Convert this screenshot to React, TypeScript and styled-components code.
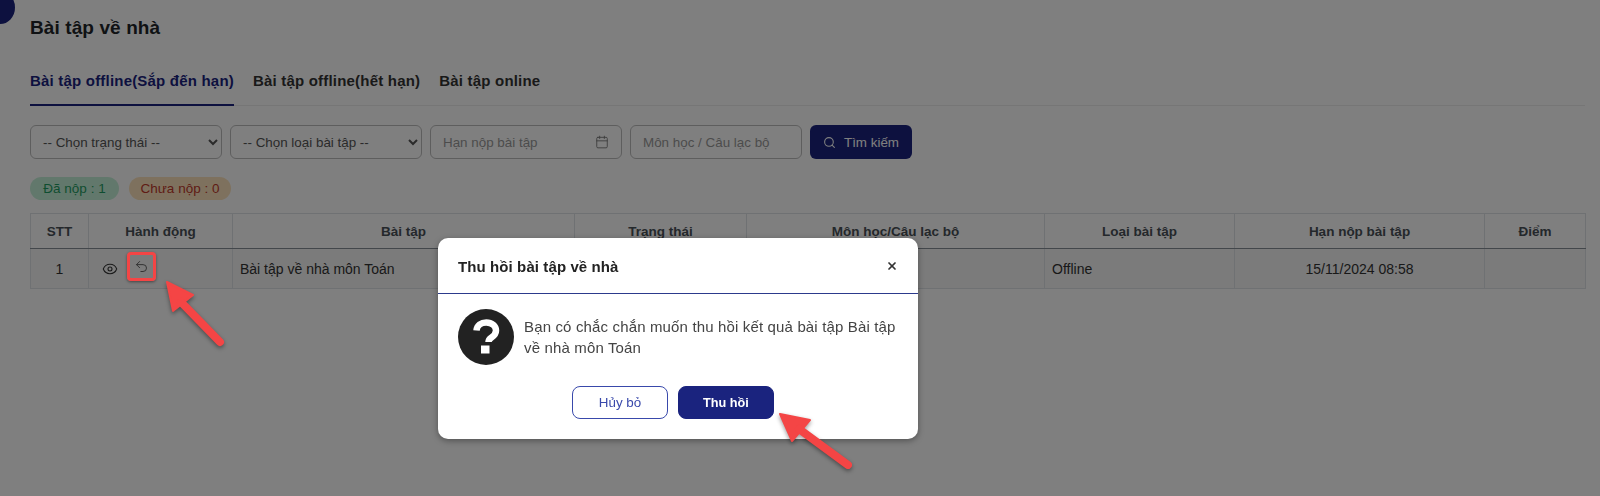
import React from "react";
import styled, { createGlobalStyle } from "styled-components";
import { Calendar, Eye, Search, Undo2, X } from "lucide-react";

const NAVY = "#1a237e";

const Global = createGlobalStyle`
  html, body { margin: 0; height: 496px; overflow: hidden; background: #fff; }
  body { font-family: "Liberation Sans", Arial, sans-serif; color: #212529; }
  * { box-sizing: border-box; }
`;

const Page = styled.main`
  padding: 17px 15px 0 30px;
  height: 496px;
`;
const Corner = styled.div`
  position: absolute;
  left: -15px;
  top: -9px;
  width: 30px;
  height: 33px;
  border-radius: 50%;
  background: ${NAVY};
`;
const Title = styled.h1`
  margin: 0;
  font-size: 19px;
  line-height: 21px;
  font-weight: 700;
  letter-spacing: 0.1px;
  color: #212529;
`;
const Tabs = styled.nav`
  display: flex;
  gap: 19px;
  margin-top: 21px;
  border-bottom: 1px solid #ececec;
`;
const Tab = styled.a<{ $active?: boolean }>`
  font-size: 15px;
  line-height: 17px;
  font-weight: 700;
  letter-spacing: 0.2px;
  padding: 13px 0 15px;
  margin-bottom: -1px;
  color: ${(p) => (p.$active ? NAVY : "#333")};
  border-bottom: 2px solid ${(p) => (p.$active ? NAVY : "transparent")};
`;
const Filters = styled.div`
  display: flex;
  gap: 8px;
  margin-top: 19px;
`;
const Select = styled.select`
  width: 192px;
  height: 34px;
  border: 1px solid #bdbdbd;
  border-radius: 6px;
  background: #fff;
  color: #555;
  font: 13.4px "Liberation Sans", Arial, sans-serif;
  padding: 0 8px;
`;
const Field = styled.div<{ $w: number }>`
  width: ${(p) => p.$w}px;
  height: 34px;
  border: 1px solid #bdbdbd;
  border-radius: 6px;
  background: #fff;
  color: #999;
  font-size: 13.4px;
  display: flex;
  align-items: center;
  justify-content: space-between;
  padding: 0 12px;
`;
const SearchButton = styled.button`
  width: 102px;
  height: 34px;
  border: 0;
  border-radius: 6px;
  background: ${NAVY};
  color: #fff;
  font: 13.4px "Liberation Sans", Arial, sans-serif;
  display: flex;
  align-items: center;
  justify-content: center;
  gap: 8px;
`;
const Badges = styled.div`
  display: flex;
  gap: 10px;
  margin-top: 18px;
`;
const Badge = styled.span<{ $bg: string; $fg: string; $w: number }>`
  width: ${(p) => p.$w}px;
  height: 23px;
  line-height: 23px;
  text-align: center;
  border-radius: 12px;
  font-size: 13.5px;
  background: ${(p) => p.$bg};
  color: ${(p) => p.$fg};
`;
const Table = styled.table`
  width: 1555px;
  margin-top: 13px;
  border-collapse: collapse;
  table-layout: fixed;
  font-size: 14px;
`;
const Th = styled.th`
  height: 35px;
  padding: 0 8px;
  border: 1px solid #dee2e6;
  border-bottom: 1px solid #868e96;
  color: #495057;
  font-size: 13.5px;
  font-weight: 700;
  text-align: center;
`;
const Td = styled.td<{ $center?: boolean }>`
  height: 40px;
  padding: 0 7px;
  border: 1px solid #dee2e6;
  background: #f6f6f6;
  color: #333;
  text-align: ${(p) => (p.$center ? "center" : "left")};
`;
const Actions = styled.div`
  display: flex;
  align-items: center;
  gap: 12px;
  padding-left: 6px;
  color: #333;
`;
const Backdrop = styled.div`
  position: fixed;
  inset: 0;
  background: rgba(0, 0, 0, 0.5);
`;
const Dialog = styled.section`
  position: absolute;
  left: 438px;
  top: 238px;
  width: 480px;
  height: 201px;
  border-radius: 10px;
  background: #fff;
  box-shadow: 0 2px 6px rgba(0, 0, 0, 0.35);
  display: flex;
  flex-direction: column;
`;
const DialogHead = styled.header`
  height: 56px;
  flex: none;
  display: flex;
  align-items: center;
  justify-content: space-between;
  padding: 1px 20px 0;
  border-bottom: 1px solid #2c3a8c;
`;
const DialogTitle = styled.h2`
  margin: 0;
  font-size: 15px;
  font-weight: 700;
  letter-spacing: 0.1px;
  color: #222;
`;
const DialogBody = styled.div`
  display: flex;
  align-items: center;
  gap: 10px;
  padding: 15px 0 0 20px;
`;
const Message = styled.p`
  margin: 0;
  font-size: 15px;
  line-height: 21px;
  color: #444;
  letter-spacing: 0.15px;
  width: 385px;
`;
const DialogFoot = styled.footer`
  display: flex;
  justify-content: center;
  gap: 10px;
  margin-top: 21px;
  padding-right: 10px;
`;
const DialogButton = styled.button<{ $primary?: boolean }>`
  width: 96px;
  height: 33px;
  border-radius: 8px;
  border: 1px solid ${(p) => (p.$primary ? NAVY : "#3949ab")};
  background: ${(p) => (p.$primary ? NAVY : "#fff")};
  color: ${(p) => (p.$primary ? "#fff" : "#3949ab")};
  font: ${(p) => (p.$primary ? "700 12.7px" : "400 13.4px")} "Liberation Sans", Arial, sans-serif;
`;
const Highlight = styled.div`
  position: absolute;
  left: 127px;
  top: 252px;
  width: 29px;
  height: 29px;
  border: 3px solid #f44545;
  border-radius: 4px;
  display: flex;
  align-items: center;
  justify-content: center;
  box-shadow: 0 1px 3px rgba(0, 0, 0, 0.45);
`;
const ArrowSvg = styled.svg`
  position: absolute;
  left: 0;
  top: 0;
  width: 1600px;
  height: 496px;
  pointer-events: none;
  filter: drop-shadow(0 2px 2px rgba(0, 0, 0, 0.4));
`;

const cols = [58, 144, 342, 172, 298, 190, 250, 101];
const heads = ["STT", "Hành động", "Bài tập", "Trạng thái", "Môn học/Câu lạc bộ", "Loại bài tập", "Hạn nộp bài tập", "Điểm"];

export default function App() {
  return (
    <>
      <Global />
      <Page>
        <Corner />
        <Title>Bài tập về nhà</Title>
        <Tabs>
          <Tab $active>Bài tập offline(Sắp đến hạn)</Tab>
          <Tab>Bài tập offline(hết hạn)</Tab>
          <Tab>Bài tập online</Tab>
        </Tabs>
        <Filters>
          <Select defaultValue="a"><option value="a">-- Chọn trạng thái --</option></Select>
          <Select defaultValue="a"><option value="a">-- Chọn loại bài tập --</option></Select>
          <Field $w={192}>Hạn nộp bài tập<Calendar size={14} strokeWidth={1.5} color="#777" /></Field>
          <Field $w={172}>Môn học / Câu lạc bộ</Field>
          <SearchButton><Search size={13} />Tìm kiếm</SearchButton>
        </Filters>
        <Badges>
          <Badge $w={89} $bg="#c5f0d8" $fg="#1f9d63">Đã nộp : 1</Badge>
          <Badge $w={102} $bg="#fde3bd" $fg="#c0392b">Chưa nộp : 0</Badge>
        </Badges>
        <Table>
          <colgroup>{cols.map((w, i) => <col key={i} style={{ width: w }} />)}</colgroup>
          <thead><tr>{heads.map((h) => <Th key={h}>{h}</Th>)}</tr></thead>
          <tbody>
            <tr>
              <Td $center>1</Td>
              <Td><Actions><Eye size={16} strokeWidth={1.6} /></Actions></Td>
              <Td>Bài tập về nhà môn Toán</Td>
              <Td></Td>
              <Td></Td>
              <Td>Offline</Td>
              <Td $center>15/11/2024 08:58</Td>
              <Td></Td>
            </tr>
          </tbody>
        </Table>
      </Page>
      <Backdrop />
      <Highlight><Undo2 size={15} strokeWidth={1.6} color="#333" /></Highlight>
      <Dialog>
        <DialogHead>
          <DialogTitle>Thu hồi bài tập về nhà</DialogTitle>
          <X size={12} strokeWidth={3.5} color="#333" />
        </DialogHead>
        <DialogBody>
          <svg width="56" height="56" viewBox="0 0 56 56" style={{ flex: "none" }}>
            <circle cx="28" cy="28" r="28" fill="#222" />
            <path d="M18.5 21.5c.5-5 4.500-8 9.800-8 5.500 0 9.700 3.300 9.700 8 0 3.500-2 5.300-4.500 6.900-2.300 1.500-3 2.300-3 4.600" fill="none" stroke="#fff" strokeWidth="6.500" />
            <rect x="23" y="36.500" width="8.500" height="8" fill="#fff" />
          </svg>
          <Message>Bạn có chắc chắn muốn thu hồi kết quả bài tập Bài tập về nhà môn Toán</Message>
        </DialogBody>
        <DialogFoot>
          <DialogButton>Hủy bỏ</DialogButton>
          <DialogButton $primary>Thu hồi</DialogButton>
        </DialogFoot>
      </Dialog>
      <ArrowSvg viewBox="0 0 1600 496">
        <g fill="#f44545" stroke="#f44545" strokeLinejoin="round">
          <path d="M167 282L193 295L173 311Z" strokeWidth="2" />
          <path d="M181 302L220 342" strokeWidth="8" strokeLinecap="round" />
          <path d="M780 414L810 420L792 441Z" strokeWidth="2" />
          <path d="M799 429L848 465" strokeWidth="8" strokeLinecap="round" />
        </g>
      </ArrowSvg>
    </>
  );
}
